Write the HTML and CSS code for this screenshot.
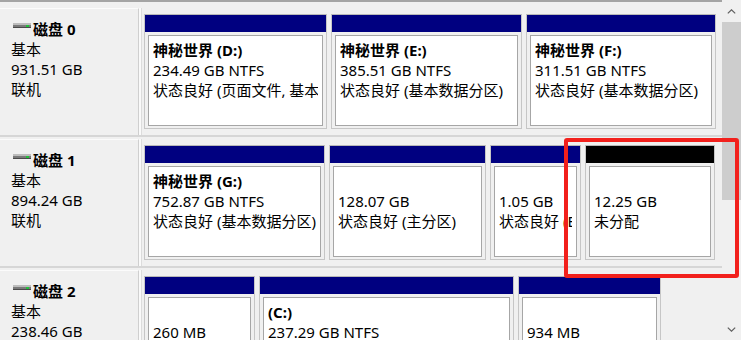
FILE: index.html
```html
<!DOCTYPE html>
<html lang="zh-CN">
<head>
<meta charset="utf-8">
<title>磁盘管理</title>
<link rel="stylesheet" href="styles.css">
</head>
<body>
<div class="app">
  <div class="main">
    <div class="row">
      <div class="label">
        <div class="disk-name"><svg class="disk-icon" width="18" height="5" viewBox="0 0 18 5"><rect x="0" y="0" width="18" height="5" fill="#7a7a7a"/><rect x="0" y="0" width="18" height="2" fill="#bdbdbd"/><rect x="0" y="4" width="18" height="1" fill="#4a4a4a"/><rect x="13" y="2" width="3" height="2" fill="#22c03a"/></svg><span>磁盘 0</span></div>
        <div class="line">基本</div>
        <div class="line">931.51 GB</div>
        <div class="line">联机</div>
      </div>
      <div class="parts">
        <div class="part" style="width:183px">
          <div class="bar"></div>
          <div class="body">
            <div class="line name">神秘世界 (D:)</div>
            <div class="line">234.49 GB NTFS</div>
            <div class="line">状态良好 (页面文件, 基本数据分区)</div>
          </div>
        </div>
        <div class="part" style="width:191px">
          <div class="bar"></div>
          <div class="body">
            <div class="line name">神秘世界 (E:)</div>
            <div class="line">385.51 GB NTFS</div>
            <div class="line">状态良好 (基本数据分区)</div>
          </div>
        </div>
        <div class="part" style="width:190px">
          <div class="bar"></div>
          <div class="body">
            <div class="line name">神秘世界 (F:)</div>
            <div class="line">311.51 GB NTFS</div>
            <div class="line">状态良好 (基本数据分区)</div>
          </div>
        </div>
      </div>
    </div>

    <div class="row">
      <div class="label">
        <div class="disk-name"><svg class="disk-icon" width="18" height="5" viewBox="0 0 18 5"><rect x="0" y="0" width="18" height="5" fill="#7a7a7a"/><rect x="0" y="0" width="18" height="2" fill="#bdbdbd"/><rect x="0" y="4" width="18" height="1" fill="#4a4a4a"/><rect x="13" y="2" width="3" height="2" fill="#22c03a"/></svg><span>磁盘 1</span></div>
        <div class="line">基本</div>
        <div class="line">894.24 GB</div>
        <div class="line">联机</div>
      </div>
      <div class="parts">
        <div class="part" style="width:181px">
          <div class="bar"></div>
          <div class="body">
            <div class="line name">神秘世界 (G:)</div>
            <div class="line">752.87 GB NTFS</div>
            <div class="line">状态良好 (基本数据分区)</div>
          </div>
        </div>
        <div class="part" style="width:157px">
          <div class="bar"></div>
          <div class="body">
            <div class="line name"></div>
            <div class="line">128.07 GB</div>
            <div class="line">状态良好 (主分区)</div>
          </div>
        </div>
        <div class="part" style="width:91px">
          <div class="bar"></div>
          <div class="body">
            <div class="line name"></div>
            <div class="line">1.05 GB</div>
            <div class="line">状态良好 (EFI 系统分区)</div>
          </div>
        </div>
        <div class="part" style="width:130px">
          <div class="bar unalloc"></div>
          <div class="body">
            <div class="line name"></div>
            <div class="line">12.25 GB</div>
            <div class="line">未分配</div>
          </div>
        </div>
      </div>
    </div>

    <div class="row">
      <div class="label">
        <div class="disk-name"><svg class="disk-icon" width="18" height="5" viewBox="0 0 18 5"><rect x="0" y="0" width="18" height="5" fill="#7a7a7a"/><rect x="0" y="0" width="18" height="2" fill="#bdbdbd"/><rect x="0" y="4" width="18" height="1" fill="#4a4a4a"/><rect x="13" y="2" width="3" height="2" fill="#22c03a"/></svg><span>磁盘 2</span></div>
        <div class="line">基本</div>
        <div class="line">238.46 GB</div>
        <div class="line">联机</div>
      </div>
      <div class="parts">
        <div class="part" style="width:111px">
          <div class="bar"></div>
          <div class="body">
            <div class="line name"></div>
            <div class="line">260 MB</div>
            <div class="line">状态良好 (EFI 系统分区)</div>
          </div>
        </div>
        <div class="part" style="width:255px">
          <div class="bar"></div>
          <div class="body">
            <div class="line name">(C:)</div>
            <div class="line">237.29 GB NTFS</div>
            <div class="line">状态良好 (启动, 页面文件, 故障转储, 基本数据分区)</div>
          </div>
        </div>
        <div class="part" style="width:143px">
          <div class="bar"></div>
          <div class="body">
            <div class="line name"></div>
            <div class="line">934 MB</div>
            <div class="line">状态良好 (恢复分区)</div>
          </div>
        </div>
      </div>
    </div>
  </div>

  <div class="scrollbar">
    <div class="arrow"><svg width="9" height="5" viewBox="0 0 9 5"><path d="M0.8 4.4 L4.5 0.8 L8.2 4.4" fill="none" stroke="#606060" stroke-width="1.2"/></svg></div>
    <div class="thumb"></div>
    <div class="track"></div>
    <div class="arrow"><svg width="9" height="5" viewBox="0 0 9 5"><path d="M0.8 0.6 L4.5 4.2 L8.2 0.6" fill="none" stroke="#606060" stroke-width="1.2"/></svg></div>
  </div>

  <div class="highlight"></div>
</div>
</body>
</html>
```

FILE: styles.css
```css
html, body {
  margin: 0;
  padding: 0;
}

body {
  background: #f0f0f0;
  font-family: "Noto Sans", "Noto Sans CJK SC", sans-serif;
  font-size: 15px;
  color: #000;
  overflow: hidden;
}

.app {
  position: relative;
  display: flex;
  width: 741px;
  height: 340px;
  overflow: hidden;
}

.main {
  width: 722px;
  flex: none;
  border-top: 2px solid #a4a4a4;
  padding-top: 6px;
  box-sizing: border-box;
}

.row {
  display: flex;
  height: 127px;
  margin-bottom: 4px;
  box-shadow: 0 2px 0 #d6d6d6;
}

.label {
  width: 139px;
  flex: none;
  box-sizing: border-box;
  padding: 10px 0 0 11px;
  background: #f0f0f0;
  border-top: 1px solid #fbfbfb;
  border-right: 1px solid #cfcfcf;
  box-shadow: 2px 0 0 #fafafa;
}

.line {
  height: 20px;
  line-height: 20px;
  white-space: nowrap;
  overflow: hidden;
}

.disk-name {
  display: flex;
  align-items: center;
  height: 20px;
  line-height: 20px;
  font-weight: bold;
  padding-left: 2px;
}

.disk-icon {
  flex: none;
  margin-right: 2px;
  margin-bottom: 7px;
}

.parts {
  display: flex;
  gap: 4px;
  margin-left: 2px;
  padding: 6px 0 0 2px;
  border-left: 1px solid #dcdcdc;
  align-items: flex-start;
}

.part {
  box-sizing: border-box;
  height: 115px;
  border: 1px solid #c6c6c6;
  border-top-color: #b8b8b8;
  background: #f0f0f0;
  display: flex;
  flex-direction: column;
  flex: none;
}

.bar {
  height: 17px;
  background: #000080;
  flex: none;
}

.bar.unalloc {
  background: #000000;
}

.body {
  flex: 1;
  margin: 3px 3px 2px;
  border: 1px solid #a6a6a6;
  background: #ffffff;
  padding: 4px 4px 0 4px;
  min-width: 0;
  overflow: hidden;
}

.name {
  font-weight: bold;
}

.scrollbar {
  width: 19px;
  flex: none;
  background: #f0f0f0;
  display: flex;
  flex-direction: column;
}

.arrow {
  height: 22px;
  display: flex;
  align-items: center;
  justify-content: center;
  flex: none;
}

.thumb {
  height: 178px;
  background: #cdcdcd;
  flex: none;
}

.track {
  flex: 1;
}

.highlight {
  position: absolute;
  left: 564px;
  top: 138px;
  width: 175px;
  height: 140px;
  box-sizing: border-box;
  border: 4px solid #f2201c;
  border-radius: 3px;
  pointer-events: none;
}
```
